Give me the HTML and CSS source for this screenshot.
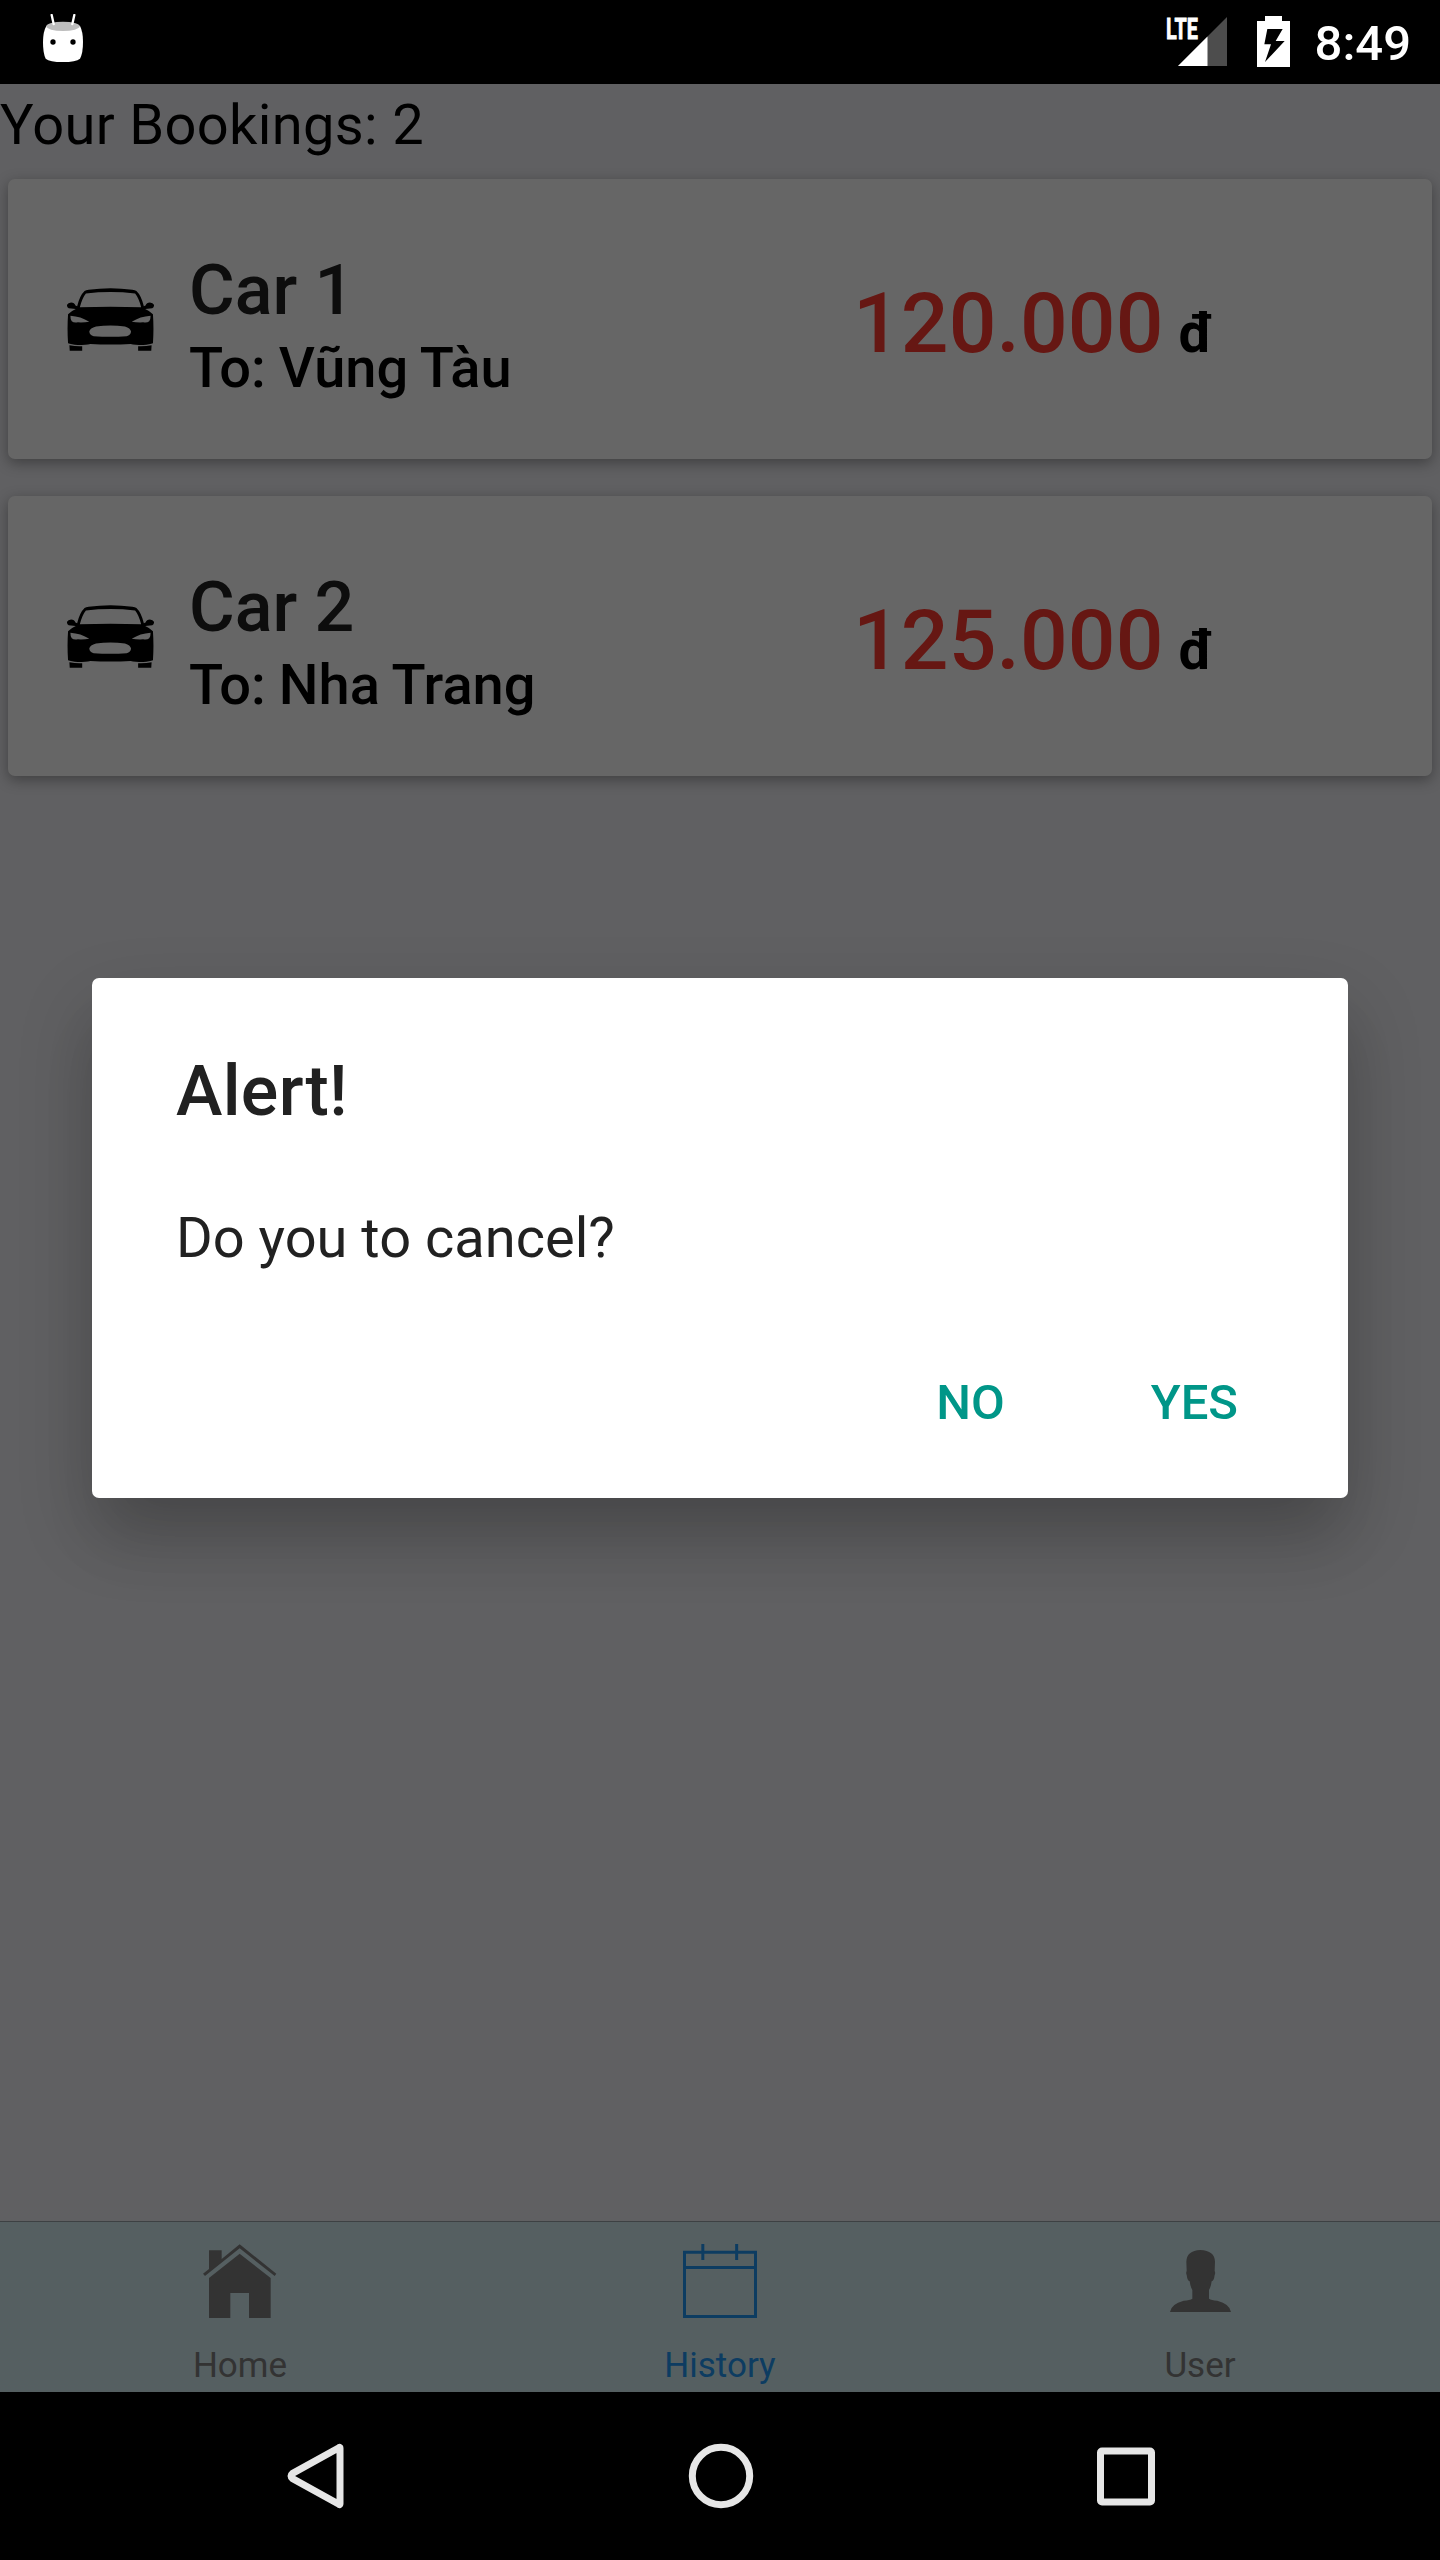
FILE: index.html
```html
<!DOCTYPE html>
<html lang="en">
<head>
<meta charset="utf-8">
<title>Your Bookings</title>
<link rel="stylesheet" href="styles.css">
</head>
<body>
<svg class="defs" aria-hidden="true">
  <symbol id="car" viewBox="54 54 258 187">
    <path fill-rule="evenodd" d="M80 116L59 114Q53 110 54 104Q57 98 66 97Q76 97 79 106L84 108Q92 76 106 63Q110 60 118 59Q183 50 248 59Q256 60 260 63Q274 76 282 108L287 106Q290 97 300 97Q309 98 312 104Q313 110 307 114L286 116Q300 122 309 132Q312 175 309 218Q300 222 280 223Q255 223 243 220Q183 224 123 220Q111 223 86 223Q66 222 57 218Q54 175 57 132Q66 122 80 116ZM92 111Q183 109 274 111Q267 83 256 70Q183 62 110 70Q99 83 92 111ZM64 136Q64 149 68 153Q74 158 86 156Q105 157 120 154Q95 138 64 136ZM302 136Q302 149 298 153Q292 158 280 156Q261 157 246 154Q271 138 302 136ZM120 183Q122 173 140 168Q183 163 226 168Q242 173 244 183Q243 194 231 197Q183 200 133 197Q121 194 120 183Z"/>
    <path d="M61 224Q80 228 99 227V240H62ZM305 224Q286 228 265 227V240H304Z"/>
  </symbol>
</svg>

<header class="status">
  <svg class="status-android" viewBox="129 42 120 144">
    <path fill="#fff" d="M139 78Q188 60 240 78Q249 95 249 126Q249 160 240 176Q228 186 188 186Q149 186 137 176Q129 160 129 126Q129 95 139 78Z"/>
    <ellipse cx="189" cy="79" rx="50" ry="14" fill="#bdbdbd"/>
    <path d="M155 45L161 72M223 45L217 72" stroke="#fff" stroke-width="7" stroke-linecap="round"/>
    <circle cx="159" cy="126" r="8"/><circle cx="219" cy="126" r="8"/>
  </svg>
  <div class="status-right">
    <svg class="status-signal" viewBox="0 0 62 50">
      <path fill="#4d4d4d" d="M61 0V49H12Z"/>
      <path fill="#fff" d="M41.500 19.500V49H12Z"/>
      <path d="M0 0H32V22H0Z"/>
      <text class="lte" x="0" y="22" textLength="32" lengthAdjust="spacingAndGlyphs">LTE</text>
    </svg>
    <svg class="status-battery" viewBox="351 48 99 153">
      <path fill="#fff" d="M375 48H426V63H450V201H351V63H375Z"/>
      <path d="M382 87H428L407 123H434L375 186L393 133H373Z"/>
    </svg>
    <span class="clock">8:49</span>
  </div>
</header>

<main class="app">
  <h1 class="heading">Your Bookings: 2</h1>
  <div class="cards">
    <article class="card">
      <svg class="car"><use href="#car"/></svg>
      <div class="info">
        <h2 class="name">Car 1</h2>
        <p class="dest">To: Vũng Tàu</p>
      </div>
      <p class="price"><span>120.000</span><span class="unit">đ</span></p>
    </article>
    <article class="card">
      <svg class="car"><use href="#car"/></svg>
      <div class="info">
        <h2 class="name">Car 2</h2>
        <p class="dest">To: Nha Trang</p>
      </div>
      <p class="price"><span>125.000</span><span class="unit">đ</span></p>
    </article>
  </div>
  <nav class="tabs">
    <div class="tab">
      <svg class="tab-icon" viewBox="69 102 222 222">
        <path fill="currentColor" d="M179 103L289 191L284 198L179 115L75 198L69 191L87 177V121H125V147ZM179 131L272 204V324H207V249H151V324H87V204Z"/>
      </svg>
      <span>Home</span>
    </div>
    <div class="tab tab-active">
      <svg class="tab-icon" viewBox="129 102 222 222">
        <path fill="none" stroke="currentColor" stroke-width="9" d="M133.500 126.500H346.500V319.500H133.500ZM133.500 172.500H346.500M188.500 102V150M290 102V150"/>
      </svg>
      <span>History</span>
    </div>
    <div class="tab">
      <svg class="tab-icon" viewBox="69 102 222 222">
        <path fill="currentColor" d="M139 155Q140 122 181 120Q224 122 225 155L224 183Q227 189 224 195Q222 212 215 214Q213 230 207 240V266Q214 270 232 272Q270 282 273 306H90Q93 282 131 272Q150 270 157 266V240Q151 230 149 214Q142 212 140 195Q137 189 140 183Z"/>
      </svg>
      <span>User</span>
    </div>
  </nav>

  <div class="scrim">
    <section class="dialog" role="alertdialog">
      <h2 class="dialog-title">Alert!</h2>
      <p class="dialog-text">Do you to cancel?</p>
      <div class="actions">
        <button class="action">NO</button>
        <button class="action">YES</button>
      </div>
    </section>
  </div>
</main>

<footer class="navbar">
  <svg class="nav-icon" viewBox="0 0 72 72"><path d="M60 8.500V63.500Q60 65.500 58.500 64L12.500 38.500Q9.500 36 12.500 33.500L58.500 8Q60 6.500 60 8.500Z"/></svg>
  <svg class="nav-icon" viewBox="0 0 72 72"><circle cx="36" cy="36" r="28.700"/></svg>
  <svg class="nav-icon" viewBox="0 0 72 72"><rect x="10.500" y="11" width="51" height="51" rx="1.500"/></svg>
</footer>
</body>
</html>
```
FILE: styles.css
```css
* { box-sizing: border-box; margin: 0; padding: 0; }

body {
  width: 1440px;
  height: 2560px;
  display: flex;
  flex-direction: column;
  background: #000;
  color: #000;
  font-family: Roboto, "Noto Sans", sans-serif;
  overflow: hidden;
}

svg { display: block; flex: none; }
.defs { display: none; }

.status {
  height: 84px;
  padding: 0 29px 0 43px;
  display: flex;
  justify-content: space-between;
}
.status-android { width: 40px; height: 48px; margin-top: 14px; }
.status-right { display: flex; color: #fff; }
.status-signal { width: 62px; height: 50px; margin: 17px 29px 0 0; overflow: visible; }
.lte { font: 700 29px Roboto, sans-serif; fill: #fff; stroke: #fff; stroke-width: .8px; }
.status-battery { width: 33px; height: 51px; margin: 16px 25px 0 0; }
.clock { font-size: 49px; font-weight: 500; line-height: 88px; }

.app {
  position: relative;
  height: 2308px;
  display: flex;
  flex-direction: column;
  background: #efeff4;
}
.heading { font-size: 56px; font-weight: 400; line-height: 82px; letter-spacing: .35px; }
.cards {
  flex: 1;
  display: flex;
  flex-direction: column;
  gap: 37px;
  padding: 13px 8px 0;
}
.card {
  height: 280px;
  padding-left: 60px;
  display: grid;
  grid-template-columns: 121px 664px 1fr;
  align-items: start;
  border-radius: 7px;
  background: #fff;
  box-shadow: 0 4px 14px rgba(0, 0, 0, .34);
}
.car { width: 87px; height: 63px; margin: 109px 0 0 -1px; }
.info { padding-top: 70px; font-weight: 500; }
.name { font-size: 70px; font-weight: 500; line-height: 82px; color: #212121; }
.dest { font-size: 56px; line-height: 74px; word-spacing: -1px; }
.price {
  display: flex;
  align-items: baseline;
  gap: 15px;
  padding-top: 96px;
  font-size: 84px;
  font-weight: 500;
  line-height: 98px;
  letter-spacing: .1px;
  color: #ff3b30;
}
.unit { font-size: 56px; font-weight: 700; color: #000; }

.tabs {
  height: 171px;
  display: flex;
  border-top: 1px solid #99a3a8;
  background: #d5edf2;
}
.tab {
  flex: 1;
  display: flex;
  flex-direction: column;
  align-items: center;
  gap: 27px;
  padding-top: 22px;
  font-size: 35px;
  line-height: 42px;
  color: #808080;
}
.tab-active { color: #2196f3; }
.tab-icon { width: 74px; height: 74px; }

.scrim {
  position: absolute;
  inset: 0;
  display: flex;
  align-items: center;
  justify-content: center;
  background: rgba(0, 0, 0, .6);
}
.dialog {
  width: 1256px;
  height: 520px;
  padding: 71px 84px 0;
  border-radius: 7px;
  background: #fff;
  color: #212121;
  box-shadow: 0 50px 60px -10px rgba(0, 0, 0, .09), 0 32px 76px rgba(0, 0, 0, .2);
}
.dialog-title { font-size: 70px; font-weight: 500; line-height: 84px; letter-spacing: .3px; }
.dialog-text { margin-top: 69px; font-size: 56px; line-height: 72px; }
.actions { display: flex; justify-content: flex-end; gap: 146px; margin-top: 96px; padding-right: 26px; }
.action {
  min-width: 64px;
  border: 0;
  background: none;
  font: 500 49px/66px Roboto, sans-serif;
  color: #009688;
}

.navbar {
  height: 168px;
  padding: 0 278px 0 280px;
  display: flex;
  align-items: center;
  justify-content: space-between;
}
.nav-icon { width: 72px; height: 72px; fill: none; stroke: #e6e6e6; stroke-width: 7px; }
```
